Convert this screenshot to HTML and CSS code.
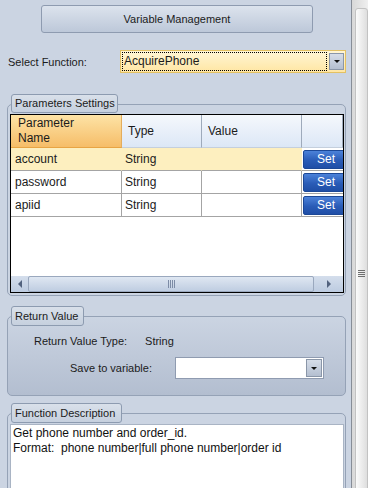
FILE: index.html
```html
<!DOCTYPE html>
<html lang="en">
<head>
    <meta charset="UTF-8">
    <title>Variable Management</title>
    <link rel="stylesheet" href="styles.css">
</head>
<body>

<div class="window">
    <div class="panel">
        <button class="vm-btn">Variable Management</button>

        <div class="func-row">
            <label class="func-label">Select Function:</label>
            <div class="combo combo-focus">
                <span class="combo-text">AcquirePhone</span>
                <span class="drop-btn"><span class="drop-arrow"></span></span>
            </div>
        </div>

        <div class="group group-params">
            <div class="group-tab tab-params">Parameters Settings</div>
            <div class="group-box params-box">
                <div class="grid">
                    <div class="grid-row grid-head">
                        <div class="cell head-cell head-active">Parameter<br>Name</div>
                        <div class="cell head-cell">Type</div>
                        <div class="cell head-cell">Value</div>
                        <div class="cell head-cell"></div>
                    </div>
                    <div class="grid-row grid-line selected">
                        <div class="cell">account</div>
                        <div class="cell">String</div>
                        <div class="cell"></div>
                        <div class="cell btn-cell"><span class="set-btn">Set</span></div>
                    </div>
                    <div class="grid-row grid-line">
                        <div class="cell">password</div>
                        <div class="cell">String</div>
                        <div class="cell"></div>
                        <div class="cell btn-cell"><span class="set-btn">Set</span></div>
                    </div>
                    <div class="grid-row grid-line">
                        <div class="cell">apiid</div>
                        <div class="cell">String</div>
                        <div class="cell"></div>
                        <div class="cell btn-cell"><span class="set-btn">Set</span></div>
                    </div>
                    <div class="grid-fill"></div>
                    <div class="hscroll">
                        <span class="hs-btn"><span class="arrow-left"></span></span>
                        <span class="hs-thumb"><span class="grip-v"></span></span>
                        <span class="hs-btn hs-right"><span class="arrow-right"></span></span>
                    </div>
                </div>
            </div>
        </div>

        <div class="group group-return">
            <div class="group-tab tab-return">Return Value</div>
            <div class="group-box return-box">
                <div class="ret-row">
                    <span class="ret-label">Return Value Type:</span>
                    <span>String</span>
                </div>
                <div class="save-row">
                    <span class="save-label">Save to variable:</span>
                    <div class="combo combo-plain">
                        <span class="combo-text"></span>
                        <span class="drop-btn"><span class="drop-arrow"></span></span>
                    </div>
                </div>
            </div>
        </div>

        <div class="group group-desc">
            <div class="group-tab tab-desc">Function Description</div>
            <div class="group-box desc-box">
                <div class="desc-text">Get phone number and order_id.
Format:  phone number|full phone number|order id</div>
            </div>
        </div>
    </div>

    <div class="vscroll">
        <div class="vthumb"><span class="grip-h"></span></div>
    </div>
</div>

</body>
</html>
```

FILE: styles.css
```css
:root {
    --bg: #cbd4e2;
    --frame: #95a2b6;
    --text: #1b1b1b;
}

* {
    box-sizing: border-box;
}

body {
    margin: 0;
    font-family: "Liberation Sans", Arial, sans-serif;
    font-size: 11px;
    color: var(--text);
    background: var(--bg);
}

.window {
    display: flex;
    width: 368px;
    height: 488px;
    overflow: hidden;
}

.panel {
    flex: none;
    width: 352px;
    border-right: 1px solid #878d97;
    background: var(--bg);
    padding-top: 5px;
}

/* top button */
.vm-btn {
    display: block;
    margin: 0 0 0 41px;
    width: 272px;
    height: 28px;
    border: 1px solid #8e9bb0;
    border-radius: 3px;
    background: linear-gradient(#dce3ed, #bdc8d9);
    font-family: inherit;
    font-size: 11px;
    color: var(--text);
    padding: 0;
}

/* select function */
.func-row {
    display: flex;
    align-items: center;
    margin-top: 17px;
}

.func-label {
    width: 120px;
    padding-left: 8px;
}

.combo {
    display: flex;
    align-items: center;
    padding: 1px;
}

.combo-focus {
    width: 226px;
    height: 23px;
    border: 1px solid #e3c163;
    background: linear-gradient(#fff6d6, #ffe6a3);
}

.combo-focus .combo-text {
    width: 205px;
    height: 19px;
    border: 1px dotted #000;
    line-height: 17px;
    padding-left: 1px;
    font-size: 12px;
}

.drop-btn {
    margin-left: auto;
    width: 15px;
    height: 17px;
    border: 1px solid #8a96a8;
    background: linear-gradient(#d6dde8, #b4bfd0);
    display: flex;
    align-items: center;
    justify-content: center;
}

.drop-arrow {
    width: 0;
    height: 0;
    border-left: 3px solid transparent;
    border-right: 3px solid transparent;
    border-top: 3px solid #111;
}

/* group boxes */
.group {
    margin-left: 7px;
    width: 339px;
}

.group-tab {
    position: relative;
    z-index: 1;
    margin-left: 4px;
    height: 19px;
    border: 1px solid #8d9bb0;
    border-radius: 3px;
    background: linear-gradient(#d9e0ea, #c6d0de);
    padding-left: 3px;
    line-height: 17px;
}

.group-box {
    border: 1px solid var(--frame);
    border-radius: 5px;
}

.group-params {
    margin-top: 21px;
}

.tab-params {
    width: 107px;
}

.params-box {
    margin-top: -9px;
    padding: 9px 1px 2px 2px;
}

/* parameters grid */
.grid {
    width: 334px;
    height: 179px;
    border: 1px solid #000;
    background: #fff;
    display: flex;
    flex-direction: column;
    overflow: hidden;
    font-size: 12px;
}

.grid > * {
    flex-shrink: 0;
}

.grid-row {
    display: grid;
    grid-template-columns: 111px 80px 100px 41px;
}

.cell {
    border-right: 1px solid #a4a4a4;
    border-bottom: 1px solid #a4a4a4;
    padding-left: 3px;
    display: flex;
    align-items: center;
    white-space: nowrap;
}

.cell:first-child {
    padding-left: 4px;
}

.grid-head {
    height: 33px;
}

.head-cell {
    background: linear-gradient(#f5f8fc, #dce7f6);
    border-right-color: #9eaabb;
    border-bottom-color: #c4cfdd;
    padding-left: 6px;
    line-height: 15px;
}

.head-cell.head-active {
    background: linear-gradient(#fde3a6, #f6bd68);
    border-right-color: #e4ad5c;
    border-bottom-color: #e8a443;
    padding-left: 7px;
}

.grid-line {
    height: 23px;
}

.selected .cell {
    background: #fdefbf;
    border-right-color: transparent;
}

.selected .cell:nth-child(3) {
    border-right-color: #fdefbf;
}

.btn-cell {
    padding: 1px 0 1px 1px;
    border-right: none;
}

.selected .btn-cell {
    background: #fff;
}

.set-btn {
    flex: none;
    width: 46px;
    height: 19px;
    border: 1px solid #1c4897;
    border-radius: 2px;
    background: linear-gradient(#4c82d9, #2a5cb7 55%, #1f4ea6);
    color: #fff;
    text-align: center;
    line-height: 17px;
    font-size: 12px;
}

.grid-fill {
    flex: 1 1 auto;
}

.hscroll {
    height: 16px;
    display: flex;
    background: linear-gradient(#d4deec, #bccbe0);
}

.hs-btn {
    width: 17px;
    display: flex;
    align-items: center;
    justify-content: center;
}

.hs-right {
    width: 29px;
}

.arrow-left {
    border-top: 4px solid transparent;
    border-bottom: 4px solid transparent;
    border-right: 4px solid #52627e;
}

.arrow-right {
    border-top: 4px solid transparent;
    border-bottom: 4px solid transparent;
    border-left: 4px solid #52627e;
}

.hs-thumb {
    flex: 1;
    border: 1px solid #9aa8be;
    border-radius: 2px;
    background: linear-gradient(#dfe7f2, #bfcde1);
    display: flex;
    align-items: center;
    justify-content: center;
}

.grip-v {
    width: 7px;
    height: 8px;
    background: repeating-linear-gradient(to right, #7d8ca6 0 1px, transparent 1px 2px);
}

/* return value */
.group-return {
    margin-top: 10px;
}

.tab-return {
    width: 73px;
    height: 20px;
    line-height: 18px;
}

.return-box {
    margin-top: -10px;
    height: 80px;
    padding-top: 16px;
    background: linear-gradient(var(--bg), #b3bed0);
}

.ret-row {
    padding-left: 26px;
    height: 16px;
    line-height: 16px;
}

.ret-label {
    display: inline-block;
    width: 108px;
}

.save-row {
    display: flex;
    align-items: center;
    margin-top: 8px;
    padding-left: 62px;
}

.save-label {
    width: 105px;
}

.combo-plain {
    width: 149px;
    height: 22px;
    border: 1px solid #8f9bb0;
    background: #fff;
}

.combo-plain .drop-btn {
    width: 16px;
    height: 18px;
}

/* description */
.group-desc {
    margin-top: 7px;
}

.tab-desc {
    width: 111px;
    height: 20px;
    line-height: 18px;
}

.desc-box {
    margin-top: -10px;
    padding: 10px 1px 0 2px;
    height: 90px;
}

.desc-text {
    height: 80px;
    border: 1px solid #a9b4c4;
    border-bottom: none;
    background: #fff;
    padding: 1px 0 0 2px;
    font-size: 12px;
    line-height: 15px;
    white-space: pre-wrap;
    color: #111;
}

/* vertical scrollbar */
.vscroll {
    flex: none;
    width: 16px;
    padding: 8px 0 0 3px;
    background: linear-gradient(to right, #d8d8d8, #efefef);
}

.vthumb {
    height: 520px;
    border: 1px solid #c2c2c2;
    border-radius: 3px;
    background: linear-gradient(to right, #fbfbfb, #dedede);
    padding-top: 261px;
    padding-left: 2px;
}

.grip-h {
    display: block;
    width: 7px;
    height: 7px;
    background: repeating-linear-gradient(#6f6f6f 0 1px, transparent 1px 2px);
}
```
